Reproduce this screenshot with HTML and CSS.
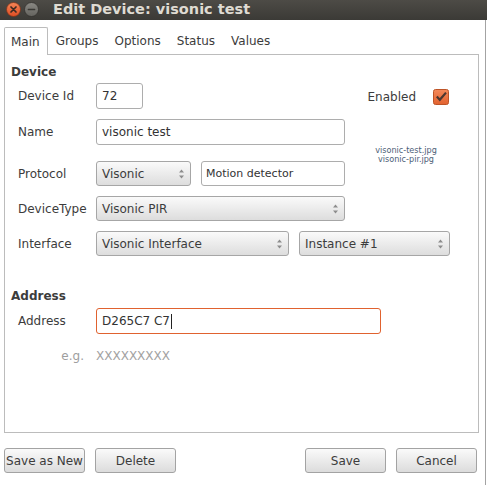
FILE: index.html
```html
<!DOCTYPE html>
<html lang="en">
  <head>
    <meta charset="UTF-8" />
    <meta name="viewport" content="width=device-width, initial-scale=1.0" />
    <title>Edit Device</title>
    <link rel="stylesheet" href="styles.css">
  </head>
  <body>
    <div class="titlebar">
      <span class="wbtn">
        <svg width="15" height="15" viewBox="0 0 15 15">
          <defs>
            <linearGradient id="closeFill" x1="0" y1="0" x2="0" y2="1">
              <stop offset="0" stop-color="#f58557" />
              <stop offset="1" stop-color="#de4e24" />
            </linearGradient>
          </defs>
          <circle cx="7.5" cy="7.5" r="7" fill="url(#closeFill)" stroke="#7a3218" stroke-width="0.7" />
          <path d="M5 5L10 10M10 5L5 10" stroke="#3b2a22" stroke-width="1.7" stroke-linecap="round" />
        </svg>
      </span>
      <span class="wbtn">
        <svg width="15" height="15" viewBox="0 0 15 15">
          <defs>
            <linearGradient id="minFill" x1="0" y1="0" x2="0" y2="1">
              <stop offset="0" stop-color="#8a8984" />
              <stop offset="1" stop-color="#64635e" />
            </linearGradient>
          </defs>
          <circle cx="7.5" cy="7.5" r="7" fill="url(#minFill)" stroke="#2e2d2a" stroke-width="0.7" />
          <path d="M4.5 7.5H10.5" stroke="#3a3935" stroke-width="1.7" stroke-linecap="round" />
        </svg>
      </span>
      <span class="title">Edit Device: visonic test</span>
    </div>

    <div class="dialog">
      <div class="tabs">
        <span class="tab active">Main</span>
        <span class="tab">Groups</span>
        <span class="tab">Options</span>
        <span class="tab">Status</span>
        <span class="tab">Values</span>
      </div>

      <div class="pane">
        <div class="section-title">Device</div>
        <div class="form device-form">
          <span class="label">Device Id</span>
          <div class="entry id-entry">72</div>
          <div class="enabled">
            Enabled
            <svg class="check" width="16" height="16" viewBox="0 0 16 16">
              <defs>
                <linearGradient id="checkFill" x1="0" y1="0" x2="0" y2="1">
                  <stop offset="0" stop-color="#f3895a" />
                  <stop offset="1" stop-color="#e2622f" />
                </linearGradient>
              </defs>
              <rect x="0.5" y="0.5" width="15" height="15" rx="2" fill="url(#checkFill)" stroke="#bd5427" />
              <path d="M3.8 7.6L6.8 10.8L13 3.6" fill="none" stroke="#4b3730" stroke-width="2.2" />
            </svg>
          </div>

          <span class="label">Name</span>
          <div class="entry name-entry">visonic test</div>
          <div class="images">visonic-test.jpg<br />visonic-pir.jpg</div>

          <span class="label">Protocol</span>
          <div class="pair">
            <div class="combo protocol">
              <span>Visonic</span>
              <svg class="arrows" width="5" height="10" viewBox="0 0 5 10"><path d="M0 3.5L2.5 0.5L5 3.5ZM0 6.5L2.5 9.5L5 6.5Z" fill="#8c8c8c" /></svg>
            </div>
            <div class="entry small-entry">Motion detector</div>
          </div>

          <span class="label">DeviceType</span>
          <div class="combo">
            <span>Visonic PIR</span>
            <svg class="arrows" width="5" height="10" viewBox="0 0 5 10"><path d="M0 3.5L2.5 0.5L5 3.5ZM0 6.5L2.5 9.5L5 6.5Z" fill="#8c8c8c" /></svg>
          </div>

          <span class="label">Interface</span>
          <div class="pair wide">
            <div class="combo iface">
              <span>Visonic Interface</span>
              <svg class="arrows" width="5" height="10" viewBox="0 0 5 10"><path d="M0 3.5L2.5 0.5L5 3.5ZM0 6.5L2.5 9.5L5 6.5Z" fill="#8c8c8c" /></svg>
            </div>
            <div class="combo instance">
              <span>Instance #1</span>
              <svg class="arrows" width="5" height="10" viewBox="0 0 5 10"><path d="M0 3.5L2.5 0.5L5 3.5ZM0 6.5L2.5 9.5L5 6.5Z" fill="#8c8c8c" /></svg>
            </div>
          </div>
        </div>

        <div class="section-title address-title">Address</div>
        <div class="form address-form">
          <span class="label">Address</span>
          <div class="entry focused">D265C7 C7<span class="caret"></span></div>
          <span class="label hint">e.g.</span>
          <span class="example">XXXXXXXXX</span>
        </div>
      </div>

      <div class="actions">
        <button class="btn">Save as New</button>
        <button class="btn">Delete</button>
        <span class="spacer"></span>
        <button class="btn">Save</button>
        <button class="btn">Cancel</button>
      </div>
    </div>
  </body>
</html>
```

FILE: styles.css
```css
* {
  margin: 0;
  padding: 0;
  box-sizing: border-box;
}
body {
  width: 487px;
  height: 485px;
  background-color: #ffffff;
  color: #3c3c3c;
  font-family: "DejaVu Sans", "Noto Sans", sans-serif;
  font-size: 12px;
  overflow: hidden;
}

/* window title */
.titlebar {
  height: 20px;
  display: flex;
  align-items: center;
  gap: 3px;
  padding: 0 0 2px 6px;
  background: linear-gradient(#4d4b46, #3b3a36);
}
.wbtn {
  display: flex;
  width: 15px;
  height: 15px;
}
.title {
  margin-left: 11px;
  color: #dfdbd2;
  font-weight: bold;
  font-size: 14.5px;
  line-height: 16px;
}

/* dialog body */
.dialog {
  width: 486px;
  height: 465px;
  border-right: 1px solid #a3a3a3;
  display: flex;
  flex-direction: column;
  padding: 7px 6px 0 4px;
}
.tabs {
  display: flex;
  height: 27px;
}
.tab {
  display: flex;
  align-items: center;
  padding: 0 8px;
  height: 27px;
}
.tab.active {
  position: relative;
  height: 28px;
  margin-bottom: -1px;
  padding: 0 7px 0 6px;
  background: #ffffff;
  border: 1px solid #bcbcbc;
  border-bottom: none;
  border-radius: 2px 2px 0 0;
  z-index: 1;
}
.pane {
  flex: 1;
  border: 1px solid #bcbcbc;
  padding: 9px 0 0 6px;
}
.section-title {
  font-weight: bold;
  line-height: 16px;
}
.address-title {
  margin-top: 32px;
}

/* form grids */
.form {
  display: grid;
  grid-template-columns: 78px 249px 1fr;
  row-gap: 10px;
  padding-left: 7px;
  align-items: start;
}
.device-form {
  margin-top: 3px;
}
.address-form {
  margin-top: 4px;
  grid-template-columns: 78px 285px;
  row-gap: 9px;
}
.label {
  grid-column: 1;
  padding-top: 2px;
  line-height: 23px;
  white-space: nowrap;
}
.label.hint {
  color: #9e9e9e;
  text-align: right;
  padding-right: 12px;
}
.example {
  color: #a2a2a2;
  padding-top: 2px;
  line-height: 23px;
}

.entry {
  height: 26px;
  display: flex;
  align-items: center;
  padding-left: 5px;
  background: #ffffff;
  border: 1px solid #adadad;
  border-radius: 3px;
  color: #333333;
  white-space: nowrap;
}
.id-entry {
  width: 47px;
}
.name-entry {
  margin-bottom: 6px;
}
.small-entry {
  width: 144px;
  height: 25px;
  padding-left: 4px;
  font-size: 11px;
}
.entry.focused {
  border-color: #e0622f;
}
.caret {
  display: inline-block;
  width: 1px;
  height: 15px;
  margin-left: 1px;
  background: #222222;
}

.combo {
  height: 25px;
  display: flex;
  align-items: center;
  justify-content: space-between;
  padding: 0 6px 0 5px;
  background: linear-gradient(#fafafa, #dddddd);
  border: 1px solid #a6a6a6;
  border-radius: 3px;
  white-space: nowrap;
}
.combo.protocol {
  width: 95px;
}
.combo.iface {
  width: 193px;
}
.combo.instance {
  width: 151px;
}
.arrows {
  flex: none;
}
.pair {
  display: flex;
  gap: 10px;
}
.pair.wide {
  grid-column: 2 / 4;
}

.enabled {
  height: 26px;
  display: flex;
  align-items: center;
  justify-content: flex-end;
  gap: 17px;
  padding: 1px 29px 0 0;
}
.check {
  margin-top: 1px;
}
.images {
  grid-row: 2 / span 2;
  grid-column: 3;
  padding: 27px 11px 0 0;
  text-align: center;
  color: #4d5e77;
  font-family: "DejaVu Sans Condensed", "DejaVu Sans", sans-serif;
  font-size: 9px;
  line-height: 9px;
}

/* bottom buttons */
.actions {
  height: 52px;
  display: flex;
  align-items: flex-start;
  gap: 11px;
  padding: 15px 2px 0 0;
}
.spacer {
  flex: 1;
}
.btn {
  width: 81px;
  height: 25px;
  font-family: inherit;
  font-size: 12px;
  color: #3c3c3c;
  background: linear-gradient(#fafafa, #dcdcdc);
  border: 1px solid #a3a3a3;
  border-radius: 3px;
  white-space: nowrap;
}
.btn + .btn {
  margin-left: -1px;
}
```
